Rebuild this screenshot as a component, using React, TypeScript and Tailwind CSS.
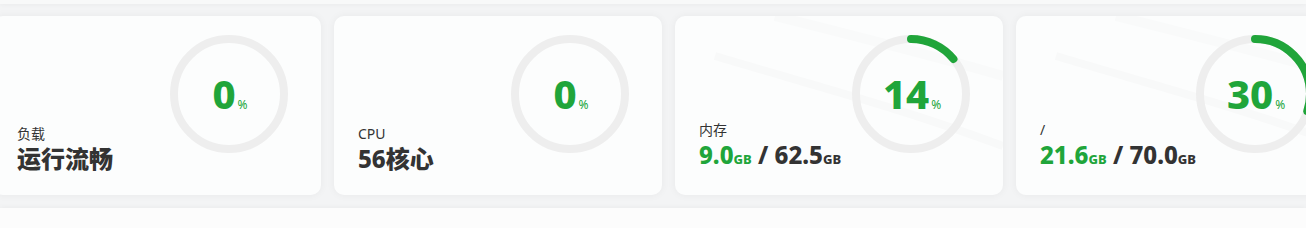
import React from "react";

const GREEN = "#20a53a";
const FONT = '"Noto Sans", "Noto Sans CJK SC", sans-serif';

function Ring({ value }: { value: number }) {
  const r = 55;
  const c = 2 * Math.PI * r;
  const len = (value / 100) * c;
  return (
    <div className="relative w-[118px] h-[118px] shrink-0">
      <svg width="118" height="118" viewBox="0 0 118 118" className="absolute inset-0">
        <circle cx="59" cy="59" r={r} fill="none" stroke="#eeeeee" strokeWidth="8" />
        {value > 0 && (
          <circle
            cx="59"
            cy="59"
            r={r}
            fill="none"
            stroke={GREEN}
            strokeWidth="8"
            strokeLinecap="round"
            strokeDasharray={`${len} ${c}`}
            transform="rotate(-90 59 59)"
          />
        )}
      </svg>
      <div className="absolute inset-0 flex items-center justify-center">
        <div className="flex items-baseline pl-[2px]">
          <span className="text-[40px] font-extrabold leading-none text-[#20a53a]">{value}</span>
          <span className="text-[12px] leading-none text-[#20a53a] ml-[2px]">%</span>
        </div>
      </div>
    </div>
  );
}

function Card({
  label,
  value,
  children,
  deco,
}: {
  label: string;
  value: number;
  children: React.ReactNode;
  deco?: boolean;
}) {
  return (
    <div className="relative w-[328px] h-[179px] shrink-0 rounded-[10px] bg-[#fcfdfd] shadow-[0_0_8px_rgba(0,0,0,0.05)] overflow-hidden flex justify-between">
      {deco && (
        <svg className="absolute inset-0" width="328" height="179" viewBox="0 0 328 179">
          <path d="M40 40 C 140 70, 220 90, 328 130" stroke="#f8f9f9" strokeWidth="8" fill="none" />
          <path d="M100 0 C 180 20, 260 40, 328 60" stroke="#f9fafa" strokeWidth="10" fill="none" />
        </svg>
      )}
      <div className="relative flex flex-col justify-end pl-6 pb-[21px]">
        <div className="text-[14px] leading-[18px] text-[#333]">{label}</div>
        <div className="mt-[1px] text-[24px] leading-[30px] font-extrabold text-[#333] whitespace-nowrap">{children}</div>
      </div>
      <div className="relative mt-[19px] mr-[33px]">
        <Ring value={value} />
      </div>
    </div>
  );
}

export default function App() {
  return (
    <div className="w-[1306px] h-[228px] overflow-hidden bg-[#f3f4f5]" style={{ fontFamily: FONT }}>
      <div className="h-[4px] bg-[#f8f9f9] shadow-[0_1px_4px_rgba(0,0,0,0.04)]" />
      <div className="-ml-[7px] mt-[12px] flex gap-[13px]">
        <Card label="负载" value={0}>
          <span>运行流畅</span>
        </Card>
        <Card label="CPU" value={0}>
          <span>56核心</span>
        </Card>
        <Card label="内存" value={14} deco>
          <span className="text-[#20a53a]">9.0</span>
          <span className="text-[13px] text-[#20a53a]">GB</span>
          <span> / 62.5</span>
          <span className="text-[13px]">GB</span>
        </Card>
        <Card label="/" value={30} deco>
          <span className="text-[#20a53a]">21.6</span>
          <span className="text-[13px] text-[#20a53a]">GB</span>
          <span> / 70.0</span>
          <span className="text-[13px]">GB</span>
        </Card>
      </div>
      <div className="mt-[13px] h-[40px] bg-[#fcfcfc] shadow-[0_0_6px_rgba(0,0,0,0.05)]" />
    </div>
  );
}
